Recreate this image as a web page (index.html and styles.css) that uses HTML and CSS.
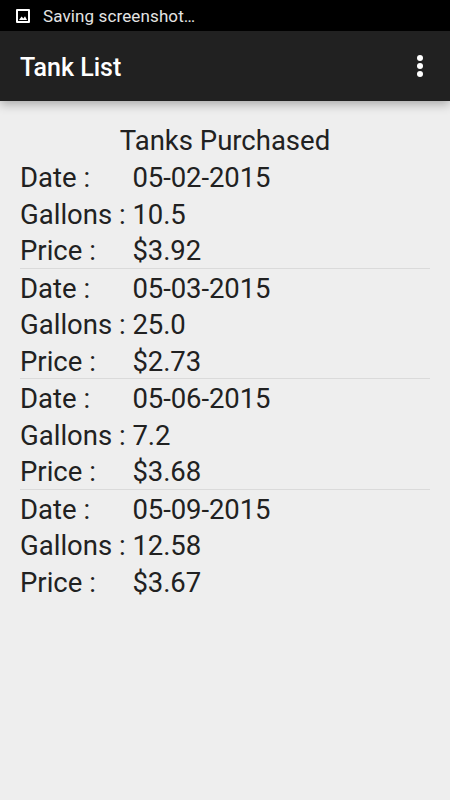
FILE: index.html
```html
<!DOCTYPE html>
<html lang="en">
<head>
    <link rel="stylesheet" href="styles.css">
</head>
<body>
<div class="statusbar">
    <svg class="statusicon" width="16" height="16" viewBox="0 0 16 16">
        <path fill-rule="evenodd" fill="#fff" d="M2 1h12a1 1 0 0 1 1 1v12a1 1 0 0 1-1 1H2a1 1 0 0 1-1-1V2a1 1 0 0 1 1-1zM3 3v10h10V3zM4 12l2.6-3.6 1.8 2 1.6-2.2L12 12z"/>
    </svg>
    <span>Saving screenshot…</span>
</div>
<div class="appbar">
    <span class="apptitle">Tank List</span>
    <div class="overflow">
        <div class="dot"></div>
        <div class="dot"></div>
        <div class="dot"></div>
    </div>
</div>
<div class="content">
    <div class="listtitle">Tanks Purchased</div>
    <div class="tank">
        <div class="row"><span class="rowlabel">Date :</span><span class="rowvalue">05-02-2015</span></div>
        <div class="row"><span class="rowlabel">Gallons :</span><span class="rowvalue">10.5</span></div>
        <div class="row"><span class="rowlabel">Price :</span><span class="rowvalue">$3.92</span></div>
    </div>
    <div class="tank">
        <div class="row"><span class="rowlabel">Date :</span><span class="rowvalue">05-03-2015</span></div>
        <div class="row"><span class="rowlabel">Gallons :</span><span class="rowvalue">25.0</span></div>
        <div class="row"><span class="rowlabel">Price :</span><span class="rowvalue">$2.73</span></div>
    </div>
    <div class="tank">
        <div class="row"><span class="rowlabel">Date :</span><span class="rowvalue">05-06-2015</span></div>
        <div class="row"><span class="rowlabel">Gallons :</span><span class="rowvalue">7.2</span></div>
        <div class="row"><span class="rowlabel">Price :</span><span class="rowvalue">$3.68</span></div>
    </div>
    <div class="tank">
        <div class="row"><span class="rowlabel">Date :</span><span class="rowvalue">05-09-2015</span></div>
        <div class="row"><span class="rowlabel">Gallons :</span><span class="rowvalue">12.58</span></div>
        <div class="row"><span class="rowlabel">Price :</span><span class="rowvalue">$3.67</span></div>
    </div>
</div>
</body>
</html>
```
FILE: styles.css
```css
html, body {
    height: 100%;
}

body {
    margin: 0;
    display: flex;
    flex-direction: column;
    background-color: #eeeeee;
    color: #212121;
    font-family: Roboto, sans-serif;
    overflow: hidden;
}

.statusbar {
    display: flex;
    align-items: center;
    height: 31px;
    padding-left: 15px;
    background-color: #000000;
    color: #e4e4e4;
    font-size: 17px;
    letter-spacing: 0.12px;
}

.statusicon {
    margin-right: 12px;
}

.appbar {
    display: flex;
    align-items: center;
    justify-content: space-between;
    height: 70px;
    padding: 0 27px 0 20px;
    background-color: #212121;
    box-shadow: 0 3px 10px rgba(0, 0, 0, 0.3);
    color: #ffffff;
}

.apptitle {
    padding-top: 3px;
    font-size: 25px;
    font-weight: 500;
}

.overflow {
    display: flex;
    flex-direction: column;
    gap: 2px;
}

.dot {
    width: 6px;
    height: 6px;
    border-radius: 50%;
    background-color: #ffffff;
}

.content {
    padding: 22px 20px 0 20px;
    font-size: 27.5px;
}

.listtitle {
    text-align: center;
    line-height: 35px;
}

.tank {
    border-bottom: 1px solid #dadada;
}

.tank:last-child {
    border-bottom: none;
}

.row {
    display: flex;
    box-sizing: border-box;
    height: 36.55px;
    padding-top: 4px;
    line-height: 32.55px;
}

.rowlabel {
    width: 112.5px;
}

.rowvalue {
    letter-spacing: -0.1px;
}
```
